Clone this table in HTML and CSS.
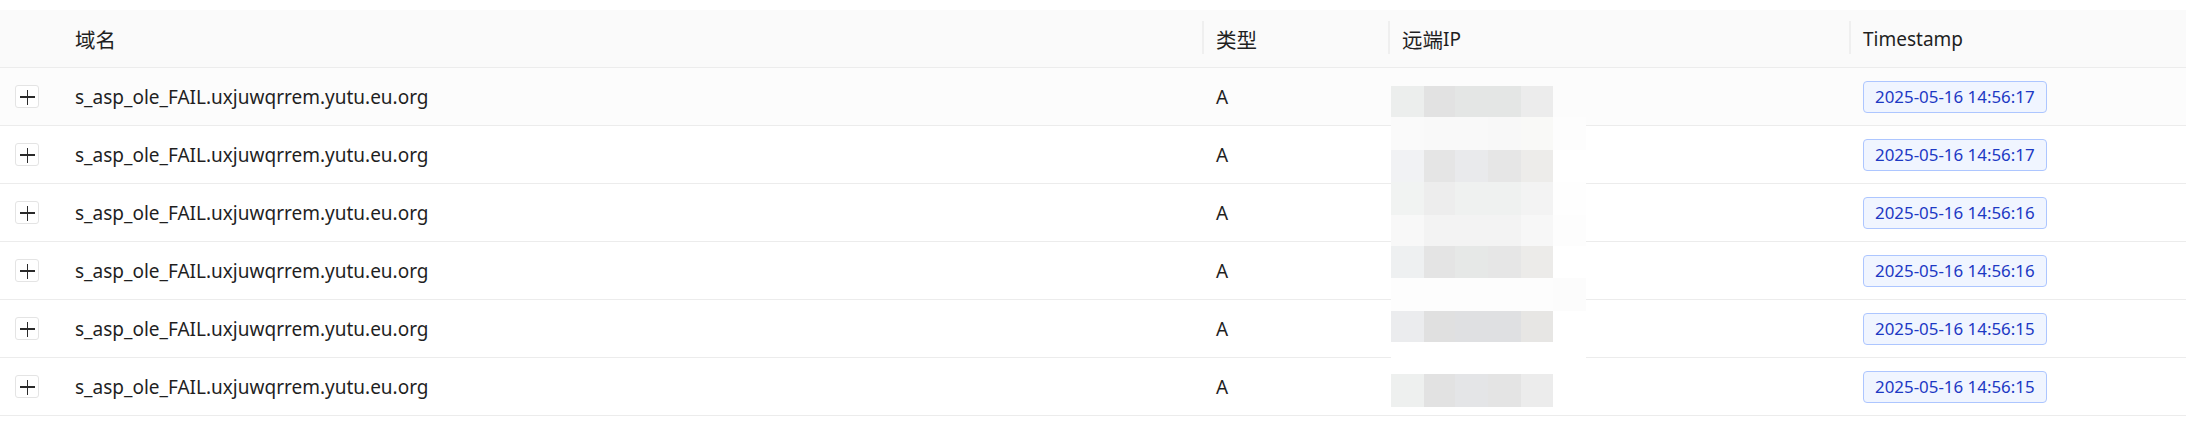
FILE: index.html
```html
<!DOCTYPE html>
<html lang="zh">
<head>
<meta charset="utf-8">
<title>Records</title>
<link rel="stylesheet" href="styles.css">
</head>
<body>
<div class="table">
  <div class="row head">
    <div class="cell"></div>
    <div class="cell th sep"><span class="cjk">域名</span></div>
    <div class="cell th sep"><span class="cjk">类型</span></div>
    <div class="cell th sep"><span class="cjk">远端</span>IP</div>
    <div class="cell th">Timestamp</div>
  </div>
  <div class="row hover">
    <div class="expand-cell"><span class="btn"></span></div>
    <div class="cell">s_asp_ole_FAIL.uxjuwqrrem.yutu.eu.org</div>
    <div class="cell">A</div>
    <div class="cell"></div>
    <div class="cell"><span class="tag">2025-05-16 14:56:17</span></div>
  </div>
  <div class="row">
    <div class="expand-cell"><span class="btn"></span></div>
    <div class="cell">s_asp_ole_FAIL.uxjuwqrrem.yutu.eu.org</div>
    <div class="cell">A</div>
    <div class="cell"></div>
    <div class="cell"><span class="tag">2025-05-16 14:56:17</span></div>
  </div>
  <div class="row">
    <div class="expand-cell"><span class="btn"></span></div>
    <div class="cell">s_asp_ole_FAIL.uxjuwqrrem.yutu.eu.org</div>
    <div class="cell">A</div>
    <div class="cell"></div>
    <div class="cell"><span class="tag">2025-05-16 14:56:16</span></div>
  </div>
  <div class="row">
    <div class="expand-cell"><span class="btn"></span></div>
    <div class="cell">s_asp_ole_FAIL.uxjuwqrrem.yutu.eu.org</div>
    <div class="cell">A</div>
    <div class="cell"></div>
    <div class="cell"><span class="tag">2025-05-16 14:56:16</span></div>
  </div>
  <div class="row">
    <div class="expand-cell"><span class="btn"></span></div>
    <div class="cell">s_asp_ole_FAIL.uxjuwqrrem.yutu.eu.org</div>
    <div class="cell">A</div>
    <div class="cell"></div>
    <div class="cell"><span class="tag">2025-05-16 14:56:15</span></div>
  </div>
  <div class="row">
    <div class="expand-cell"><span class="btn"></span></div>
    <div class="cell">s_asp_ole_FAIL.uxjuwqrrem.yutu.eu.org</div>
    <div class="cell">A</div>
    <div class="cell"></div>
    <div class="cell"><span class="tag">2025-05-16 14:56:15</span></div>
  </div>

  <div class="mosaic" aria-hidden="true">
    <i class="a"></i><i class="b"></i><i class="c"></i><i class="c"></i><i class="d"></i><i class="e"></i>
    <i class="f"></i><i class="g"></i><i class="g"></i><i class="h"></i><i class="i"></i><i class="j"></i>
    <i class="k"></i><i class="l"></i><i class="m"></i><i class="n"></i><i class="o"></i><i class="p"></i>
    <i class="q"></i><i class="r"></i><i class="s"></i><i class="s"></i><i class="t"></i><i class="u"></i>
    <i class="h"></i><i class="t"></i><i class="t"></i><i class="t"></i><i class="v"></i><i class="j"></i>
    <i class="w"></i><i class="x"></i><i class="y"></i><i class="n"></i><i class="z"></i><i class="p"></i>
    <i class="j"></i><i class="j"></i><i class="j"></i><i class="j"></i><i class="j"></i><i class="e"></i>
    <i class="A"></i><i class="B"></i><i class="C"></i><i class="C"></i><i class="D"></i><i class="p"></i>
    <i class="p"></i><i class="p"></i><i class="p"></i><i class="p"></i><i class="p"></i><i class="p"></i>
    <i class="E"></i><i class="b"></i><i class="F"></i><i class="x"></i><i class="d"></i><i class="p"></i>
  </div>
</div>
</body>
</html>
```

FILE: styles.css
```css
html, body {
  margin: 0;
  padding: 0;
  background: #ffffff;
}

body {
  font-family: "Noto Sans", "Noto Sans CJK SC", sans-serif;
  font-size: 19px;
  color: #1f1f1f;
}

.table {
  position: relative;
  padding-top: 10px;
}

.row {
  display: grid;
  grid-template-columns: 63px 1141px 186px 461px 1fr;
  align-items: center;
  height: 57px;
  border-bottom: 1px solid #ececec;
  background: #ffffff;
}

.row.head {
  background: #fafafa;
}

.row.hover {
  background: #fcfcfc;
}

.cell {
  position: relative;
  padding-left: 12px;
  height: 100%;
  display: flex;
  align-items: center;
  white-space: nowrap;
}

.th {
  font-weight: normal;
}

.cjk {
  font-family: "Noto Sans CJK SC", sans-serif;
  font-size: 20.5px;
}

.sep::after {
  content: "";
  position: absolute;
  right: 0;
  top: 11px;
  width: 2px;
  height: 33px;
  background: #efefef;
}

.expand-cell {
  height: 100%;
  display: flex;
  align-items: center;
  padding-left: 15px;
}

.btn {
  position: relative;
  display: block;
  box-sizing: border-box;
  width: 24px;
  height: 23px;
  border: 1px solid #e4e4e4;
  border-radius: 3px;
  background: #ffffff;
}

.btn::before,
.btn::after {
  content: "";
  position: absolute;
  background: #2a2a2a;
}

.btn::before {
  left: 4px;
  top: 10px;
  width: 15px;
  height: 1.5px;
}

.btn::after {
  left: 10.75px;
  top: 3.5px;
  width: 1.5px;
  height: 15px;
}

.tag {
  display: inline-block;
  padding: 0 11px;
  height: 30px;
  line-height: 30px;
  font-size: 16.9px;
  color: #1d39c4;
  background: #f0f5ff;
  border: 1px solid #adc6ff;
  border-radius: 4px;
}

.mosaic {
  position: absolute;
  left: 1391px;
  top: 86px;
  display: grid;
  grid-template-columns: 33px 31px 33px 33px 32px 33px;
  grid-template-rows: 31px 33px 32px 33px 31px 32px 33px 31px 32px 33px;
}

.mosaic i { display: block; }
.mosaic .a { background: #eceeed; }
.mosaic .b { background: #e2e2e2; }
.mosaic .c { background: #e4e6e5; }
.mosaic .d { background: #ececec; }
.mosaic .e { background: #fcfcfc; }
.mosaic .f { background: #fafafa; }
.mosaic .g { background: #f9f9f9; }
.mosaic .h { background: #f8f8f8; }
.mosaic .i { background: #f9f9f7; }
.mosaic .j { background: #fdfdfd; }
.mosaic .k { background: #f1f2f4; }
.mosaic .l { background: #e5e5e5; }
.mosaic .m { background: #e9eaec; }
.mosaic .n { background: #e6e6e6; }
.mosaic .o { background: #edecea; }
.mosaic .p { background: #ffffff; }
.mosaic .q { background: #f1f3f2; }
.mosaic .r { background: #ededed; }
.mosaic .s { background: #eff1f0; }
.mosaic .t { background: #f3f3f3; }
.mosaic .u { background: #fefefe; }
.mosaic .v { background: #f7f7f7; }
.mosaic .w { background: #eef0f1; }
.mosaic .x { background: #e4e4e4; }
.mosaic .y { background: #e6e8e7; }
.mosaic .z { background: #ecebe9; }
.mosaic .A { background: #ebecee; }
.mosaic .B { background: #e0e0e0; }
.mosaic .C { background: #dfe0e2; }
.mosaic .D { background: #e7e6e4; }
.mosaic .E { background: #eef0ef; }
.mosaic .F { background: #e4e5e7; }
```
